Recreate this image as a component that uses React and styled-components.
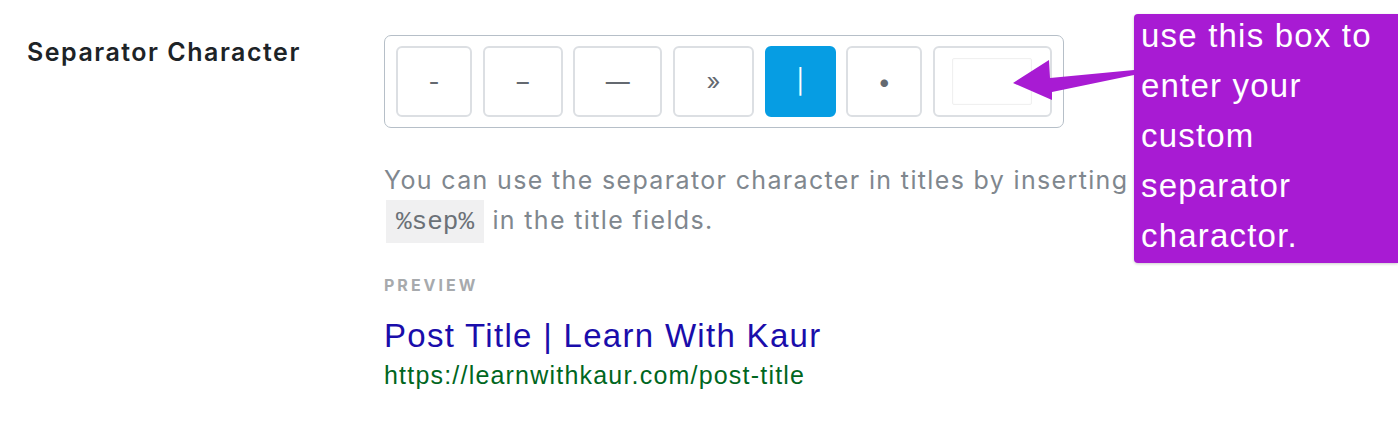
import React from 'react';
import styled, { createGlobalStyle } from 'styled-components';

const GlobalStyle = createGlobalStyle`
  body {
    margin: 0;
    background: #ffffff;
    font-family: Inter, "Noto Sans", sans-serif;
  }
`;

const separators = [
  { char: '-', width: 76 },
  { char: '–', width: 80 },
  { char: '—', width: 89 },
  { char: '»', width: 81 },
  { char: '|', width: 71, active: true },
  { char: '•', width: 76 },
];

export default function App() {
  return (
    <Page>
      <GlobalStyle />
      <SettingRow>
        <Label>Separator Character</Label>
        <Field>
          <SeparatorGroup>
            {separators.map((sep) => (
              <SepButton key={sep.char} $width={sep.width} $active={sep.active}>
                {sep.char}
              </SepButton>
            ))}
            <SepButton as="div" $width={119}>
              <CustomInput type="text" />
            </SepButton>
          </SeparatorGroup>
          <Description>
            You can use the separator character in titles by inserting <Code>%sep%</Code> in the
            title fields.
          </Description>
          <PreviewLabel>Preview</PreviewLabel>
          <PreviewTitle>Post Title | Learn With Kaur</PreviewTitle>
          <PreviewUrl>https://learnwithkaur.com/post-title</PreviewUrl>
        </Field>
      </SettingRow>

      <Callout>
        <CalloutText>
          use this box to
          <br />
          enter your
          <br />
          custom
          <br />
          separator
          <br />
          charactor.
        </CalloutText>
      </Callout>
      <Arrow viewBox="0 0 130 50" width="130" height="50">
        <polygon points="8,28 44,5 45,23 129,15 129,20 47,37 47,45" fill="#a81bd3" />
      </Arrow>
    </Page>
  );
}

const Page = styled.div`
  position: relative;
  width: 1398px;
  height: 426px;
  overflow: hidden;
`;

const SettingRow = styled.div`
  display: flex;
  padding: 35px 0 0 27px;
`;

const Label = styled.div`
  width: 357px;
  flex-shrink: 0;
  padding-top: 1px;
  font-size: 25px;
  line-height: 32px;
  font-weight: 600;
  letter-spacing: 1.5px;
  color: #1d2327;
`;

const Field = styled.div`
  width: 750px;
  display: flex;
  flex-direction: column;
  align-items: flex-start;
`;

const SeparatorGroup = styled.div`
  display: flex;
  gap: 10.67px;
  padding: 10px 11px;
  border: 1.5px solid #b6bfc8;
  border-radius: 7px;
`;

const SepButton = styled.button`
  box-sizing: border-box;
  display: flex;
  align-items: center;
  justify-content: center;
  width: ${(p) => p.$width}px;
  height: 71px;
  padding: 0;
  border: 2px solid ${(p) => (p.$active ? '#069de3' : '#dcdfe3')};
  border-radius: 6px;
  background: ${(p) => (p.$active ? '#069de3' : '#ffffff')};
  color: ${(p) => (p.$active ? '#ffffff' : '#646970')};
  font-family: Inter, "Noto Sans", sans-serif;
  font-size: 24px;
  cursor: pointer;
`;

const CustomInput = styled.input`
  box-sizing: border-box;
  width: 80px;
  height: 47px;
  border: 1px solid #f0f0f0;
  border-radius: 2px;
  background: #ffffff;
  box-shadow: inset 0 0 2px rgba(0, 0, 0, 0.04);
  outline: none;
`;

const Description = styled.p`
  margin: 32px 0 0;
  font-size: 25px;
  line-height: 40px;
  letter-spacing: 1.35px;
  color: #80878e;
`;

const Code = styled.code`
  margin-left: 2px;
  padding: 7px 10px 6px;
  background: #f0f0f1;
  color: #6b7177;
  font-family: "Liberation Mono", "DejaVu Sans Mono", monospace;
  font-size: 26px;
  letter-spacing: 0;
`;

const PreviewLabel = styled.div`
  margin-top: 33px;
  font-size: 16px;
  line-height: 20px;
  font-weight: 700;
  letter-spacing: 3px;
  text-transform: uppercase;
  color: #a7aaad;
`;

const PreviewTitle = styled.div`
  margin-top: 23px;
  font-family: "Liberation Sans", Arial, sans-serif;
  font-size: 33px;
  line-height: 36px;
  letter-spacing: 1.3px;
  color: #1a0dab;
`;

const PreviewUrl = styled.div`
  margin-top: 1px;
  font-family: "Liberation Sans", Arial, sans-serif;
  font-size: 25px;
  line-height: 40px;
  letter-spacing: 1.2px;
  color: #006621;
`;

const Callout = styled.div`
  position: absolute;
  left: 1134px;
  top: 14px;
  width: 264px;
  height: 249px;
  box-sizing: border-box;
  padding: 0 0 0 7px;
  background: #a81bd3;
  border-radius: 4px 0 0 4px;
  box-shadow: 0 1px 3px rgba(0, 0, 0, 0.2);
`;

const CalloutText = styled.div`
  margin-top: -3px;
  font-family: "Liberation Sans", Arial, sans-serif;
  font-size: 33px;
  line-height: 50px;
  letter-spacing: 1.2px;
  color: #ffffff;
`;

const Arrow = styled.svg`
  position: absolute;
  left: 1005px;
  top: 55px;
  overflow: visible;
`;
